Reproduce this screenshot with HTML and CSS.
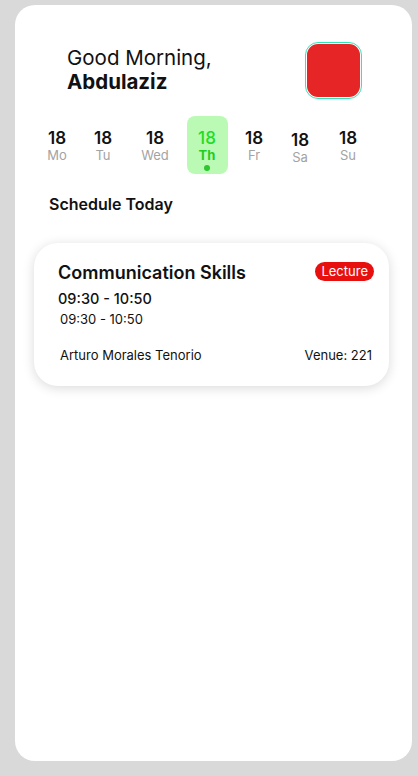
FILE: index.html
```html
<!DOCTYPE html>
<html>
<head>
<meta charset="utf-8">
<link rel="stylesheet" href="styles.css">
</head>
<body>
<div class="panel">
  <header class="header">
    <div class="greeting">
      <div class="hello">Good Morning,</div>
      <div class="name">Abdulaziz</div>
    </div>
    <div class="avatar"><div class="avatar-inner"></div></div>
  </header>
  <div class="days">
    <div class="day d-mo"><span class="num">18</span><span class="lbl">Mo</span></div>
    <div class="day d-tu"><span class="num">18</span><span class="lbl">Tu</span></div>
    <div class="day d-we"><span class="num">18</span><span class="lbl">Wed</span></div>
    <div class="day active"><span class="num">18</span><span class="lbl">Th</span><span class="dot"></span></div>
    <div class="day d-fr"><span class="num">18</span><span class="lbl">Fr</span></div>
    <div class="day d-sa low"><span class="num">18</span><span class="lbl">Sa</span></div>
    <div class="day d-su"><span class="num">18</span><span class="lbl">Su</span></div>
  </div>
  <h2 class="section-title">Schedule Today</h2>
  <div class="card">
    <div class="card-top">
      <div class="course">Communication Skills</div>
      <span class="badge">Lecture</span>
    </div>
    <div class="time">09:30 - 10:50</div>
    <div class="time-small">09:30 - 10:50</div>
    <div class="card-foot">
      <span>Arturo Morales Tenorio</span>
      <span>Venue: 221</span>
    </div>
  </div>
</div>
</body>
</html>
```
FILE: styles.css
```css
* { box-sizing: border-box; }
html, body { margin: 0; padding: 0; }
body {
  background: #d9d9d9;
  width: 418px;
  height: 776px;
  font-family: Inter, "Noto Sans", sans-serif;
  color: #111;
  padding: 5px 6px 15px 15px;
}
.panel {
  background: #fff;
  border-radius: 20px;
  height: 756px;
  padding-top: 37px;
}
.header {
  display: flex;
  justify-content: space-between;
  align-items: flex-start;
  padding: 0 50px 0 52px;
}
.greeting { padding-top: 4px; font-size: 20.5px; line-height: 24px; }
.hello { font-weight: 400; }
.name { font-weight: 700; }
.avatar {
  width: 57px;
  height: 57px;
  border: 1.5px solid #2fe6b8;
  border-radius: 13px;
  padding: 1px;
  background: #fff;
}
.avatar-inner {
  width: 100%;
  height: 100%;
  background: #e52526;
  border-radius: 11px;
}
.days {
  display: flex;
  padding: 17px 0 0 19px;
}
.day {
  height: 58px;
  display: flex;
  flex-direction: column;
  align-items: center;
  padding-top: 13px;
}
.d-mo, .d-tu { width: 46px; }
.d-we { width: 58px; }
.d-fr { width: 48px; }
.d-sa { width: 44px; }
.d-su { width: 52px; }
.day .num { font-size: 17px; font-weight: 600; line-height: 19px; color: #111; }
.day .lbl { font-size: 13px; line-height: 15px; color: #a3a3a3; }
.day.low { padding-top: 15px; }
.day.active {
  width: 41px;
  margin: 0 2.5px;
  background: #bafab5;
  border-radius: 8px;
}
.day.active .num { color: #22dc22; font-weight: 500; }
.day.active .lbl { color: #22cc22; font-weight: 700; }
.dot {
  width: 6px;
  height: 6px;
  border-radius: 50%;
  background: #2fc62f;
  margin-top: 2px;
}
.section-title {
  margin: 20px 0 0 34px;
  font-size: 16px;
  font-weight: 600;
  line-height: 20px;
}
.card {
  margin: 29px 23px 0 19px;
  height: 143px;
  border-radius: 24px;
  background: #fff;
  box-shadow: 0 2px 12px rgba(0,0,0,0.15);
  padding: 18px 15px 0 24px;
}
.card-top {
  display: flex;
  justify-content: space-between;
  align-items: flex-start;
}
.course { font-size: 18px; font-weight: 600; line-height: 24px; }
.badge {
  background: #e8100f;
  color: #fff;
  font-size: 13px;
  line-height: 19px;
  padding: 0 6px;
  border-radius: 10px;
  margin-top: 1px;
}
.time { font-size: 14.5px; font-weight: 500; line-height: 20px; margin-top: 4px; }
.time-small { font-size: 13px; line-height: 18px; margin: 1px 0 0 2px; }
.card-foot {
  display: flex;
  justify-content: space-between;
  font-size: 13px;
  line-height: 18px;
  margin: 18px 2px 0 2px;
}
```
